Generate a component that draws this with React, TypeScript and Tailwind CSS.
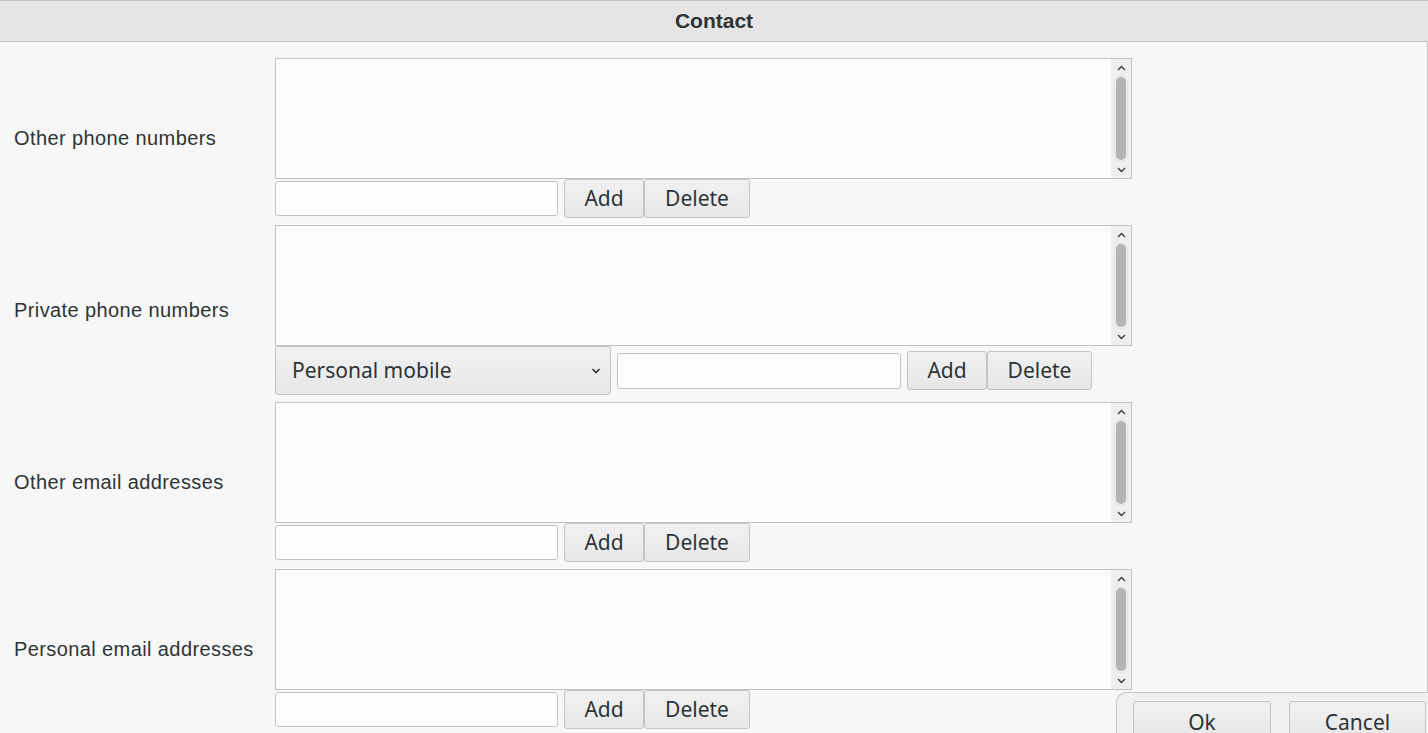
import React from "react";

const UI = '"Noto Sans", "Open Sans", sans-serif';
const LBL = '"Liberation Sans", Arial, sans-serif';

function Chevron({ dir, className }: { dir: "up" | "down"; className?: string }) {
  return (
    <svg width="9" height="6" viewBox="0 0 9 6" className={className}>
      {dir === "up" ? (
        <path d="M1 5 L4.5 1.5 L8 5" fill="none" stroke="#3a3a3a" strokeWidth="1.4" />
      ) : (
        <path d="M1 1 L4.5 4.5 L8 1" fill="none" stroke="#3a3a3a" strokeWidth="1.4" />
      )}
    </svg>
  );
}

function ListBox() {
  return (
    <div className="h-[121px] w-[857px] border border-[#c2c2c2] bg-[#fcfcfc] flex justify-end">
      <div className="w-[20px] h-full bg-[#efefef] flex flex-col items-center">
        <div className="h-[16px] flex items-center justify-center pt-[1px]">
          <Chevron dir="up" />
        </div>
        <div className="flex-1 w-[14px] flex justify-center">
          <div className="w-[14px] h-full rounded-full border border-[#e2e2e2] flex justify-center py-[1px]">
            <div className="w-[10px] h-full rounded-full bg-[#b3b3b3]" />
          </div>
        </div>
        <div className="h-[16px] flex items-center justify-center">
          <Chevron dir="down" />
        </div>
      </div>
    </div>
  );
}

function Btn({ label, w }: { label: string; w: string }) {
  return (
    <div
      className={`${w} h-[39px] shrink-0 border border-[#c4c4c4] rounded-[3px] bg-gradient-to-b from-[#f1f1f1] to-[#e7e7e7] flex items-center justify-center text-[21px] text-[#2e3436]`}
      style={{ fontFamily: UI }}
    >
      {label}
    </div>
  );
}

function Input({ w, h }: { w: string; h: string }) {
  return <div className={`${w} ${h} shrink-0 border border-[#c2c2c2] rounded-[3px] bg-[#fdfdfd]`} />;
}

function Section({ label, select }: { label: string; select?: boolean }) {
  return (
    <div className="flex">
      <div
        className="w-[275px] shrink-0 pl-[14px] flex items-center text-[20px] tracking-[0.4px] text-[#2e3436]"
        style={{ fontFamily: LBL }}
      >
        {label}
      </div>
      <div className="flex flex-col">
        <ListBox />
        {select ? (
          <div className="h-[49px] flex items-center">
            <div
              className="w-[336px] h-[49px] shrink-0 border border-[#c4c4c4] rounded-[3px] bg-gradient-to-b from-[#f1f1f1] to-[#e7e7e7] flex items-center justify-between pl-[16px] pr-[9px] text-[21px] text-[#2e3436]"
              style={{ fontFamily: UI }}
            >
              <span>Personal mobile</span>
              <svg width="10" height="6" viewBox="0 0 10 6">
                <path d="M1.5 1 L5 4.5 L8.5 1" fill="none" stroke="#2e3436" strokeWidth="1.6" />
              </svg>
            </div>
            <div className="ml-[6px]">
              <Input w="w-[284px]" h="h-[36px]" />
            </div>
            <div className="ml-[6px] flex">
              <Btn label="Add" w="w-[80px]" />
              <Btn label="Delete" w="w-[105px]" />
            </div>
          </div>
        ) : (
          <div className="h-[39px] flex items-center">
            <Input w="w-[283px]" h="h-[35px]" />
            <div className="ml-[6px] flex">
              <Btn label="Add" w="w-[80px]" />
              <Btn label="Delete" w="w-[106px]" />
            </div>
          </div>
        )}
      </div>
    </div>
  );
}

export default function App() {
  return (
    <div className="w-[1428px] h-[733px] overflow-hidden relative bg-[#f7f7f7]">
      <div
        className="h-[42px] border-t border-b border-[#c4c4c4] bg-[#e5e5e5] flex items-center justify-center font-bold text-[21px] text-[#2e3436]"
        style={{ fontFamily: LBL }}
      >
        Contact
      </div>
      <div className="h-[691px] border-r border-[#c4c4c4] pt-[16px] flex flex-col gap-[7px]">
        <Section label="Other phone numbers" />
        <Section label="Private phone numbers" select />
        <Section label="Other email addresses" />
        <Section label="Personal email addresses" />
      </div>
      <div className="absolute left-[1116px] top-[692px] right-0 bottom-0 border-t border-l border-[#c4c4c4] rounded-tl-[10px] bg-[#f0f0f0] flex pl-[16px] pt-[8px] gap-[18px]">
        <div
          className="w-[138px] h-[40px] border border-[#c4c4c4] rounded-[3px] bg-gradient-to-b from-[#f1f1f1] to-[#e7e7e7] flex items-start justify-center pt-[5px] text-[21px] text-[#2e3436]"
          style={{ fontFamily: UI }}
        >
          Ok
        </div>
        <div
          className="w-[137px] h-[40px] border border-[#c4c4c4] rounded-[3px] bg-gradient-to-b from-[#f1f1f1] to-[#e7e7e7] flex items-start justify-center pt-[5px] text-[21px] text-[#2e3436]"
          style={{ fontFamily: UI }}
        >
          Cancel
        </div>
      </div>
    </div>
  );
}
